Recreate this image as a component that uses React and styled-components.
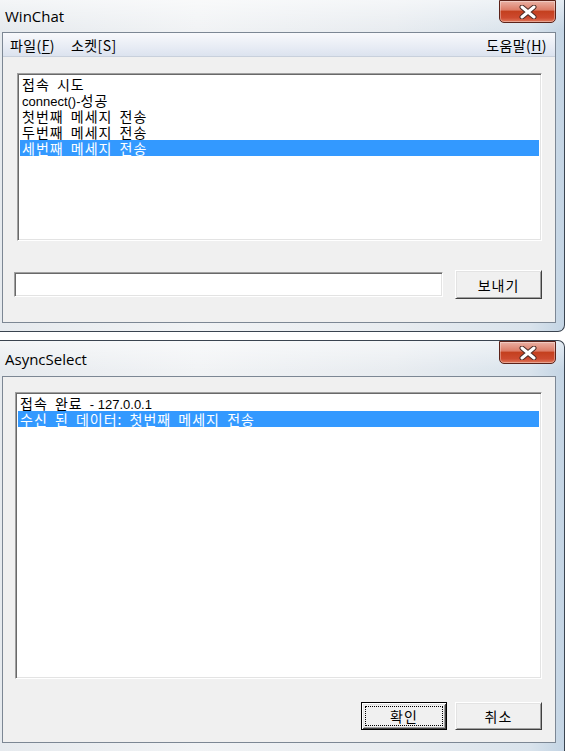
import styled, { createGlobalStyle } from 'styled-components';

const GlobalStyle = createGlobalStyle`
    html, body {
        margin: 0;
        background: #ffffff;
    }
    body {
        width: 565px;
        height: 751px;
        overflow: hidden;
    }
`

const KO = `"Noto Sans CJK KR", "Noto Sans", sans-serif`;

function CloseButton(){
    return (
        <CloseBox aria-label="닫기">
            <svg width="20" height="14" viewBox="0 0 20 14">
                <path d="M4 2 L16 12 M16 2 L4 12" stroke="#4a2b26" strokeWidth="5" strokeLinecap="round"/>
                <path d="M4 2 L16 12 M16 2 L4 12" stroke="#ffffff" strokeWidth="3" strokeLinecap="round"/>
            </svg>
        </CloseBox>
    )
}

function Row({item, selected}){
    return (
        <Item $selected={selected}>
            {item.map((part, i) => part.latin
                ? <Latin key={i}>{part.text}</Latin>
                : <span key={i}>{part.text}</span>)}
        </Item>
    )
}

const chatLog = [
    [{text:'접속 시도'}],
    [{text:'connect()-', latin:true}, {text:'성공'}],
    [{text:'첫번째 메세지 전송'}],
    [{text:'두번째 메세지 전송'}],
    [{text:'세번째 메세지 전송'}],
];

const serverLog = [
    [{text:'접속 완료 '}, {text:'- 127.0.0.1', latin:true}],
    [{text:'수신 된 데이터: 첫번째 메세지 전송'}],
];

export default function App(){
    return (
        <>
            <GlobalStyle />
            <Screen>
                <Window $h={332}>
                    <TitleBar $h={32}>
                        <Title>WinChat</Title>
                        <CloseButton />
                    </TitleBar>
                    <Client>
                        <MenuBar>
                            <MenuItem>파일(<u>F</u>)</MenuItem>
                            <MenuItem>소켓[S]</MenuItem>
                            <MenuSpacer />
                            <MenuItem>도움말(<u>H</u>)</MenuItem>
                        </MenuBar>
                        <Content $top={16} $gap={29} $bottom={23}>
                            <ListBox $inset={2}>
                                {chatLog.map((item, i) => <Row key={i} item={item} selected={i === 4}/>)}
                            </ListBox>
                            <InputRow>
                                <TextInput />
                                <PushButton $w={87} $h={29}>보내기</PushButton>
                            </InputRow>
                        </Content>
                    </Client>
                </Window>

                <Window $h={411} $top>
                    <TitleBar $h={35}>
                        <Title>AsyncSelect</Title>
                        <CloseButton />
                    </TitleBar>
                    <Client>
                        <Content $top={15} $gap={23} $bottom={12}>
                            <ListBox>
                                {serverLog.map((item, i) => <Row key={i} item={item} selected={i === 1}/>)}
                            </ListBox>
                            <ButtonRow>
                                <PushButton $w={86} $h={28} $default>확인</PushButton>
                                <PushButton $w={87} $h={28}>취소</PushButton>
                            </ButtonRow>
                        </Content>
                    </Client>
                </Window>
            </Screen>
        </>
    )
}

//Style
const Screen = styled.div`
    display: flex;
    flex-direction: column;
    gap: 8px;
    width: 565px;
`
const Window = styled.section`
    box-sizing: border-box;
    height: ${p => p.$h}px;
    display: flex;
    flex-direction: column;
    padding: 0 8px 8px 2px;
    background:
        linear-gradient(180deg, rgba(255,255,255,0.55) 0px, rgba(255,255,255,0) 30px),
        linear-gradient(90deg, #e6eaee 0%, #f1f3f5 35%, #e8ecf0 70%, #d9e3ec 94%, #c3d4e4 100%);
    border: 1px solid #3a4450;
    border-left: none;
    border-top: ${p => p.$top ? '1px solid #3a4450' : 'none'};
    border-bottom: ${p => p.$top ? 'none' : '1px solid #3a4450'};
    border-radius: ${p => p.$top ? '0 7px 0 0' : '0 0 7px 0'};
`
const TitleBar = styled.header`
    height: ${p => p.$h}px;
    flex-shrink: 0;
    display: flex;
    align-items: center;
    justify-content: space-between;
`
const Title = styled.h1`
    margin: 0 0 0 3px;
    font-family: "Open Sans", "Noto Sans", sans-serif;
    font-weight: 400;
    font-size: 15px;
    color: #000;
`
const CloseBox = styled.button`
    align-self: flex-start;
    box-sizing: border-box;
    width: 57px;
    height: 23px;
    padding: 0;
    display: flex;
    align-items: center;
    justify-content: center;
    border: 1px solid #5b2219;
    border-radius: 0 0 5px 5px;
    background: linear-gradient(180deg, #eab1a4 0%, #dc7d68 42%, #c4401f 50%, #cd4a2f 80%, #e07a5d 100%);
    box-shadow: inset 0 0 0 1px rgba(255,255,255,0.35);
`
const Client = styled.div`
    flex: 1;
    display: flex;
    flex-direction: column;
    background: #f0f0f0;
    border: 1px solid #7c8794;
`
const MenuBar = styled.nav`
    box-sizing: border-box;
    height: 24px;
    display: flex;
    align-items: center;
    padding: 0 3px 0 2px;
    gap: 6px;
    background: linear-gradient(180deg, #f8f9fc 0%, #e9edf5 55%, #dce3ef 100%);
    border-bottom: 1px solid #c8d0dc;
`
const MenuItem = styled.span`
    padding: 0 5px;
    font-family: ${KO};
    font-size: 14px;
    letter-spacing: 0.4px;
    color: #000;
    u {
        text-underline-offset: 2px;
    }
`
const MenuSpacer = styled.span`
    flex: 1;
`
const Content = styled.div`
    flex: 1;
    display: flex;
    flex-direction: column;
    gap: ${p => p.$gap}px;
    padding: ${p => p.$top}px 13px ${p => p.$bottom}px 12px;
`
const ListBox = styled.ul`
    flex: 1;
    margin: 0 0 0 ${p => p.$inset || 0}px;
    padding: 2px 2px;
    list-style: none;
    background: #fff;
    border: 1px solid;
    border-color: #a0a0a0 #ffffff #ffffff #a0a0a0;
    box-shadow: inset 1px 1px #696969, inset -1px -1px #e3e3e3;
`
const Item = styled.li`
    height: 16px;
    line-height: 16px;
    padding-left: 2px;
    font-family: ${KO};
    font-size: 14px;
    letter-spacing: 1px;
    word-spacing: 3px;
    white-space: pre;
    color: ${p => p.$selected ? '#fff' : '#000'};
    background: ${p => p.$selected ? '#3399ff' : 'transparent'};
`
const Latin = styled.span`
    font-family: "Liberation Sans", Arial, sans-serif;
    font-size: 13px;
    letter-spacing: 0;
    word-spacing: 0;
`
const InputRow = styled.div`
    display: flex;
    align-items: center;
    gap: 12px;
`
const TextInput = styled.input`
    flex: 1;
    box-sizing: border-box;
    height: 25px;
    margin-left: -1px;
    background: #fff;
    border: 1px solid;
    border-color: #a0a0a0 #ffffff #ffffff #a0a0a0;
    box-shadow: inset 1px 1px #696969, inset -1px -1px #e3e3e3;
    outline: none;
`
const ButtonRow = styled.div`
    display: flex;
    justify-content: flex-end;
    gap: 8px;
`
const PushButton = styled.button`
    position: relative;
    box-sizing: border-box;
    width: ${p => p.$w}px;
    height: ${p => p.$h}px;
    padding: 0;
    background: #f0f0f0;
    font-family: ${KO};
    font-size: 14px;
    letter-spacing: 1px;
    color: #000;
    border: 1px solid;
    border-color: ${p => p.$default ? '#000' : '#ffffff #404040 #404040 #ffffff'};
    box-shadow: ${p => p.$default
        ? 'inset 1px 1px #fff, inset -1px -1px #404040, inset 2px 2px #e3e3e3, inset -2px -2px #a0a0a0'
        : 'inset 1px 1px #e3e3e3, inset -1px -1px #a0a0a0'};
    &::after {
        content: '';
        display: ${p => p.$default ? 'block' : 'none'};
        position: absolute;
        inset: 3px;
        border: 1px dotted #000;
    }
`
